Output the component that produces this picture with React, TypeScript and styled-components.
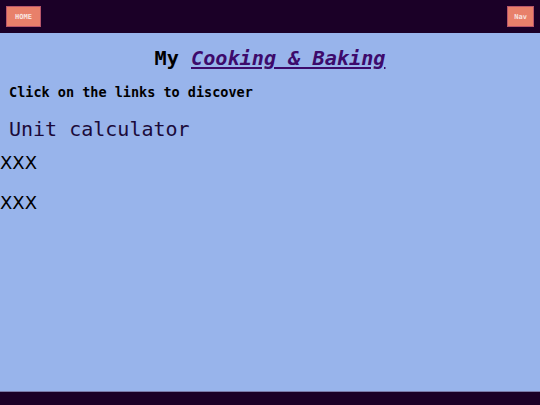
import React, { FC } from 'react';
import styled, { createGlobalStyle } from 'styled-components';

const GlobalStyle = createGlobalStyle`
  html, body {
    margin: 0;
    padding: 0;
    background: #1b0027;
  }
  body {
    font-family: 'DejaVu Sans Mono', monospace;
  }
`;

const App: FC = () => {
  return (
    <Page>
      <GlobalStyle />
      <Header>
        <NavButton $pad={8}>HOME</NavButton>
        <NavButton $pad={6}>Nav</NavButton>
      </Header>
      <Main>
        <Title>
          My <TitleLink href="#">Cooking &amp; Baking</TitleLink>
        </Title>
        <Intro>Click on the links to discover</Intro>
        <Section>Unit calculator</Section>
        <Item $gap={11}>XXX</Item>
        <Item $gap={19}>XXX</Item>
      </Main>
      <Footer />
    </Page>
  );
};

const Page = styled.div`
  display: flex;
  flex-direction: column;
  width: 100%;
`;

const Header = styled.header`
  height: 33px;
  box-sizing: border-box;
  padding: 6px 6px 0 6px;
  display: flex;
  justify-content: space-between;
  align-items: flex-start;
  background: #1b0027;
`;

const NavButton = styled.button<{ $pad: number }>`
  height: 21px;
  padding: 0 ${(p) => p.$pad}px;
  background: #e8806a;
  border: 1px solid #b8566a;
  color: #f8e4e0;
  font-family: 'DejaVu Sans Mono', monospace;
  font-size: 7px;
  font-weight: bold;
  cursor: pointer;
`;

const Main = styled.main`
  height: 358px;
  background: #98b4eb;
  display: flex;
  flex-direction: column;
  align-items: flex-start;
`;

const Title = styled.h1`
  align-self: stretch;
  margin: 13px 0 0 0;
  text-align: center;
  font-size: 20.2px;
  font-weight: bold;
  color: #000;
  line-height: normal;
`;

const TitleLink = styled.a`
  color: #3d0a6b;
  font-style: italic;
  text-decoration: underline;
`;

const Intro = styled.h4`
  margin: 14px 0 0 9px;
  font-size: 13.5px;
  font-weight: bold;
  color: #000;
  line-height: normal;
`;

const Section = styled.h2`
  margin: 17px 0 0 9px;
  font-size: 20px;
  font-weight: normal;
  color: #1b0a3a;
  line-height: normal;
`;

const Item = styled.p<{ $gap: number }>`
  margin: ${(p) => p.$gap}px 0 0 0;
  font-family: 'DejaVu Sans', sans-serif;
  font-size: 18px;
  color: #000;
  line-height: normal;
`;

const Footer = styled.footer`
  height: 30px;
  background: #1b0027;
  border-top: 1px solid #7a7aa8;
`;

export default App;
